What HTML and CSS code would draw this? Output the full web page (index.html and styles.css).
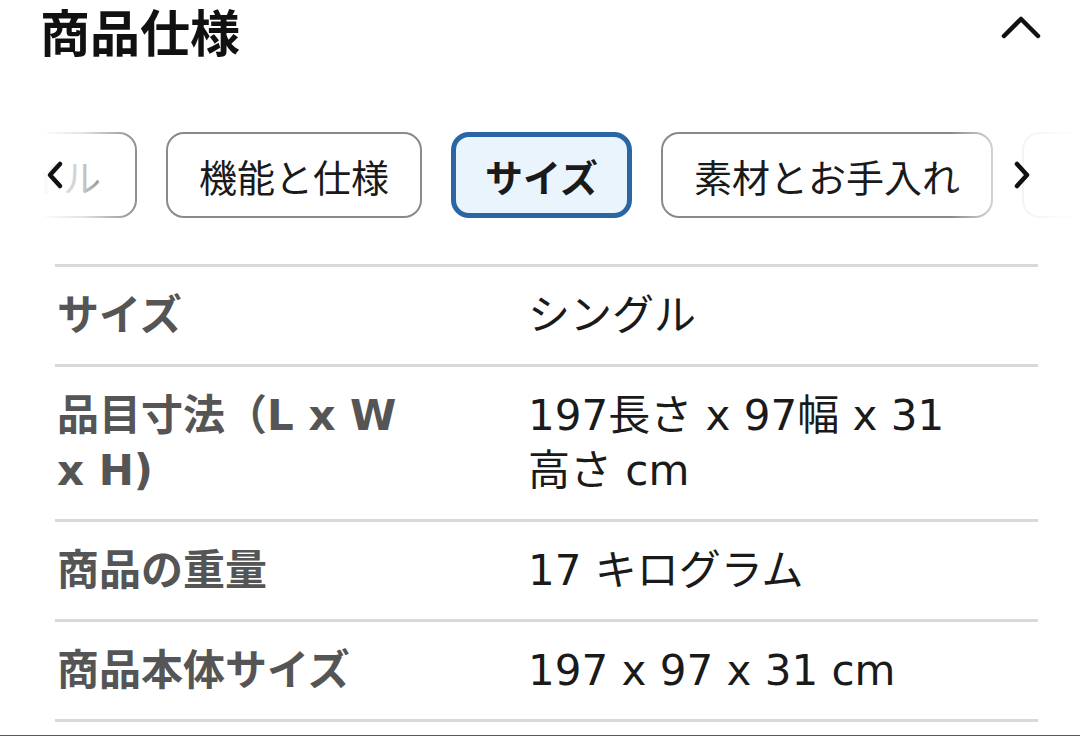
FILE: index.html
```html
<!DOCTYPE html>
<html lang="ja">
<head>
<meta charset="utf-8">
<link rel="stylesheet" href="styles.css">
</head>
<body>
<div class="page">
  <header class="head">
    <h1 class="title">商品仕様</h1>
    <svg class="collapse" width="40" height="26" viewBox="0 0 40 26"><polyline points="3,22 20,5 37,22" fill="none" stroke="#111" stroke-width="4.5" stroke-linecap="round" stroke-linejoin="round"/></svg>
  </header>

  <div class="tabs-wrap">
    <div class="tabs">
      <div class="tab tab-cut">スタイル</div>
      <div class="tab">機能と仕様</div>
      <div class="tab active">サイズ</div>
      <div class="tab">素材とお手入れ</div>
      <div class="tab tab-next">ラベル</div>
    </div>
    <div class="fade fade-left"></div>
    <div class="fade fade-right"></div>
    <svg class="arrow arrow-left" width="18" height="30" viewBox="0 0 18 30"><polyline points="14,4 4,15 14,26" fill="none" stroke="#111" stroke-width="4.5" stroke-linecap="round" stroke-linejoin="round"/></svg>
    <svg class="arrow arrow-right" width="18" height="30" viewBox="0 0 18 30"><polyline points="4,4 14,15 4,26" fill="none" stroke="#111" stroke-width="4.5" stroke-linecap="round" stroke-linejoin="round"/></svg>
  </div>

  <div class="spec">
    <div class="row">
      <div class="label">サイズ</div>
      <div class="value">シングル</div>
    </div>
    <div class="row">
      <div class="label">品目寸法（L x W x&nbsp;H)</div>
      <div class="value">197長さ x 97幅 x 31 高さ cm</div>
    </div>
    <div class="row">
      <div class="label">商品の重量</div>
      <div class="value">17 キログラム</div>
    </div>
    <div class="row">
      <div class="label">商品本体サイズ</div>
      <div class="value">197 x 97 x 31 cm</div>
    </div>
  </div>
  <div class="bottom-bar"></div>
</div>
</body>
</html>
```

FILE: styles.css
```css
* { box-sizing: border-box; }
html, body {
  margin: 0;
  padding: 0;
  background: #fff;
}
body {
  font-family: "Liberation Sans", "Noto Sans CJK JP", sans-serif;
  color: #111;
  width: 1080px;
  height: 736px;
  overflow: hidden;
}
.page {
  width: 1080px;
}
.head {
  display: flex;
  align-items: center;
  justify-content: space-between;
  height: 60px;
  padding: 0 42px 0 40px;
}
.title {
  margin: 0;
  font-size: 50px;
  font-weight: 700;
  line-height: 60px;
  color: #111;
  font-family: "Noto Sans CJK JP", sans-serif;
}
.collapse {
  display: block;
  margin-top: -6px;
  margin-right: -3px;
}
.tabs-wrap {
  position: relative;
  margin-top: 72px;
  height: 86px;
  overflow: hidden;
}
.tabs {
  display: flex;
  gap: 29px;
  height: 86px;
}
.tab {
  flex: none;
  height: 86px;
  border: 2px solid #8a8a8a;
  border-radius: 18px;
  padding: 0 31px;
  display: flex;
  align-items: center;
  font-size: 38px;
  font-family: "Noto Sans CJK JP", sans-serif;
  color: #1a1a1a;
  background: #fff;
}
.tab-cut {
  width: 230px;
  margin-left: -93px;
  justify-content: flex-end;
  padding-right: 34px;
}
.tab-next {
  color: transparent;
}
.tab.active {
  border: 5px solid #2b65a3;
  background: #eaf4fd;
  font-weight: 700;
  padding: 0 29px;
}
.fade {
  position: absolute;
  top: 0;
  height: 86px;
  pointer-events: none;
}
.fade-left {
  left: 0;
  width: 140px;
  background: linear-gradient(to right, #fff 0%, #fff 30%, rgba(255,255,255,0.75) 60%, rgba(255,255,255,0) 100%);
}
.fade-right {
  right: 0;
  width: 130px;
  background: linear-gradient(to right, rgba(255,255,255,0) 0%, rgba(255,255,255,0.5) 25%, rgba(255,255,255,0.9) 55%, #fff 100%);
}
.arrow {
  position: absolute;
  top: 28px;
}
.arrow-left { left: 46px; }
.arrow-right { left: 1013px; }

.spec {
  margin: 46px 42px 0 55px;
  border-top: 3px solid #d9d9d9;
  font-family: "DejaVu Sans", "Noto Sans CJK JP", sans-serif;
}
.row {
  display: flex;
  border-bottom: 3px solid #d9d9d9;
  padding: 21px 0;
}
.label {
  flex: none;
  width: 473px;
  padding: 0 70px 0 2px;
  font-size: 42px;
  line-height: 55px;
  font-weight: 700;
  color: #555;
}
.value {
  flex: 1;
  padding-right: 60px;
  font-size: 42px;
  line-height: 55px;
  color: #1a1a1a;
}
.bottom-bar {
  margin-top: 13px;
  height: 3px;
  background: #5a5a5a;
}
```
